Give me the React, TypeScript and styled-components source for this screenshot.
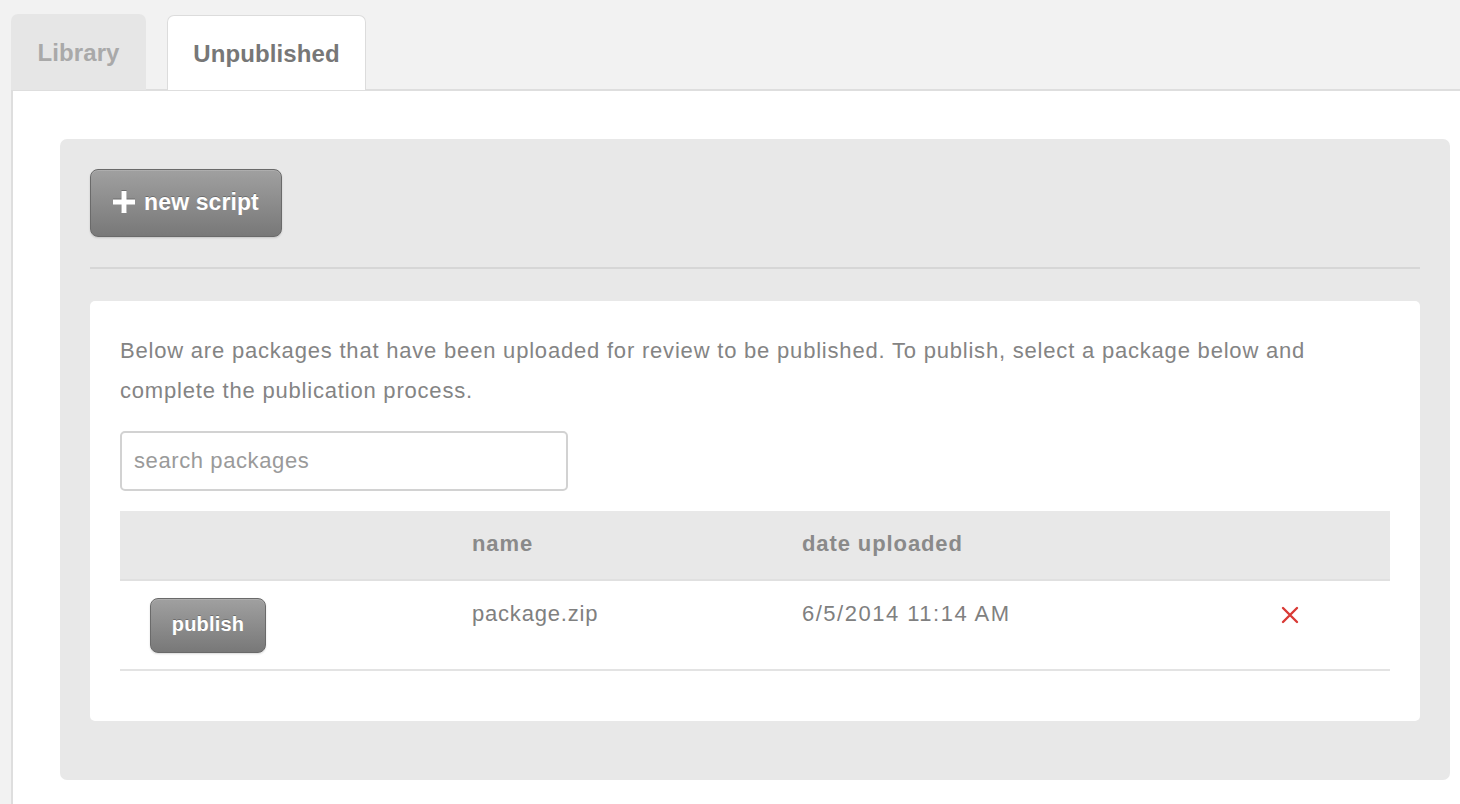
import React from "react";
import styled, { createGlobalStyle } from "styled-components";

const Global = createGlobalStyle`
  html, body { margin: 0; padding: 0; }
  body {
    background: #f2f2f2;
    font-family: "Liberation Sans", Arial, sans-serif;
    overflow: hidden;
  }
  * { box-sizing: border-box; }
`;

const Page = styled.div`
  padding: 14px 0 0 11px;
  height: 804px;
  display: flex;
  flex-direction: column;
`;

const TabBar = styled.div`
  display: flex;
  align-items: flex-end;
  gap: 21px;
  position: relative;
  z-index: 1;
  margin-bottom: -1px;
`;

const Tab = styled.div<{ $active?: boolean }>`
  height: ${(p) => (p.$active ? "75px" : "76px")};
  width: ${(p) => (p.$active ? "199px" : "135px")};
  display: flex;
  align-items: center;
  justify-content: center;
  padding-top: 2px;
  border-radius: 7px 7px 0 0;
  font-weight: bold;
  font-size: 24px;
  letter-spacing: 0.1px;
  background: ${(p) => (p.$active ? "#ffffff" : "#e6e6e6")};
  color: ${(p) => (p.$active ? "#777777" : "#a9a9a9")};
  border: ${(p) => (p.$active ? "1px solid #dcdcdc" : "none")};
  border-bottom: none;
`;

const Content = styled.div`
  flex: 1;
  background: #ffffff;
  border-top: 2px solid #dedede;
  border-left: 2px solid #dedede;
  padding: 48px 10px 0 47px;
`;

const Panel = styled.div`
  background: #e8e8e8;
  border-radius: 7px;
  padding: 30px 30px 59px;
  display: flex;
  flex-direction: column;
  align-items: flex-start;
`;

const GreyButton = styled.button<{ $size?: "lg" | "sm" }>`
  display: inline-flex;
  align-items: center;
  justify-content: center;
  gap: 9px;
  height: ${(p) => (p.$size === "sm" ? "55px" : "68px")};
  width: ${(p) => (p.$size === "sm" ? "116px" : "192px")};
  padding: 0 0 2px;
  border-radius: 8px;
  border: 1px solid #6a6a6a;
  background: linear-gradient(#a0a0a0, #787878);
  box-shadow: 0 1px 2px rgba(0, 0, 0, 0.15), inset 0 1px 0 rgba(255, 255, 255, 0.15);
  color: #ffffff;
  font-family: "Liberation Sans", Arial, sans-serif;
  font-weight: bold;
  font-size: ${(p) => (p.$size === "sm" ? "20px" : "23px")};
  letter-spacing: ${(p) => (p.$size === "sm" ? "0.2px" : "0.1px")};
  text-shadow: 0 -1px 0 rgba(0, 0, 0, 0.25);
  cursor: pointer;
`;

const Divider = styled.hr`
  align-self: stretch;
  margin: 30px 0 0;
  border: none;
  height: 2px;
  background: #d6d6d6;
`;

const Card = styled.div`
  align-self: stretch;
  margin-top: 32px;
  background: #ffffff;
  border-radius: 5px;
  padding: 30px 30px 50px;
`;

const Intro = styled.p`
  margin: 0;
  font-size: 22px;
  letter-spacing: 0.8px;
  line-height: 40px;
  color: #848484;
`;

const Search = styled.input`
  display: block;
  margin-top: 20px;
  width: 448px;
  height: 60px;
  border: 2px solid #d2d2d2;
  border-radius: 5px;
  padding: 0 12px;
  font-family: "Liberation Sans", Arial, sans-serif;
  font-size: 22px;
  letter-spacing: 0.6px;
  color: #555;
  outline: none;
  &::placeholder { color: #9a9a9a; }
`;

const Table = styled.div`
  margin-top: 20px;
  display: grid;
  grid-template-columns: 352px 330px 1fr 200px;
`;

const HeadCell = styled.div`
  height: 70px;
  background: #e8e8e8;
  border-bottom: 2px solid #e0e0e0;
  display: flex;
  align-items: center;
  font-weight: bold;
  font-size: 22px;
  letter-spacing: 0.9px;
  color: #8a8a8a;
  padding-bottom: 2px;
`;

const Cell = styled.div<{ $spacing?: number }>`
  height: 90px;
  border-bottom: 2px solid #e3e3e3;
  padding-top: 20px;
  display: flex;
  align-items: flex-start;
  font-size: 22px;
  letter-spacing: ${(p) => p.$spacing ?? 0.8}px;
  line-height: 26px;
  color: #808080;
`;

const ButtonCell = styled(Cell)`
  padding-left: 30px;
  padding-top: 17px;
`;

const IconCell = styled(Cell)`
  justify-content: center;
  padding-top: 25px;
`;

const Plus = () => (
  <svg width="22" height="22" viewBox="0 0 22 22" style={{ filter: "drop-shadow(0 -1px 0 rgba(0,0,0,0.25))" }}>
    <rect x="8.5" y="0" width="5" height="22" fill="#fff" />
    <rect x="0" y="8.5" width="22" height="5" fill="#fff" />
  </svg>
);

const Cross = () => (
  <svg width="18" height="18" viewBox="0 0 18 18">
    <path d="M2 2 L16 16 M16 2 L2 16" stroke="#d93a36" strokeWidth="2.4" strokeLinecap="round" />
  </svg>
);

export default function App() {
  return (
    <>
      <Global />
      <Page>
        <TabBar>
          <Tab>Library</Tab>
          <Tab $active>Unpublished</Tab>
        </TabBar>
        <Content>
          <Panel>
            <GreyButton>
              <Plus />
              new script
            </GreyButton>
            <Divider />
            <Card>
              <Intro>
                Below are packages that have been uploaded for review to be published. To publish, select a package below and complete the publication process.
              </Intro>
              <Search placeholder="search packages" />
              <Table>
                <HeadCell />
                <HeadCell>name</HeadCell>
                <HeadCell>date uploaded</HeadCell>
                <HeadCell />
                <ButtonCell>
                  <GreyButton $size="sm">publish</GreyButton>
                </ButtonCell>
                <Cell>package.zip</Cell>
                <Cell $spacing={1.5}>6/5/2014 11:14 AM</Cell>
                <IconCell>
                  <Cross />
                </IconCell>
              </Table>
            </Card>
          </Panel>
        </Content>
      </Page>
    </>
  );
}
